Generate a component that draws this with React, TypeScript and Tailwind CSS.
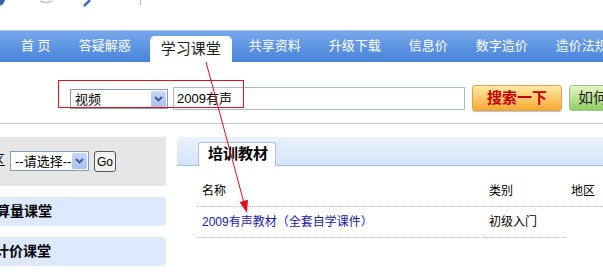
const font = "font-['Liberation_Sans','Noto_Sans_CJK_SC',sans-serif]";

function Chevron() {
  return (
    <svg width="9" height="6" viewBox="0 0 9 6">
      <path d="M1 1 L4.5 4.5 L8 1" fill="none" stroke="#3a5a9a" strokeWidth="1.8" />
    </svg>
  );
}

function Select({ label, width }: { label: string; width: string }) {
  return (
    <div className={`flex h-full shrink-0 items-stretch border border-[#7f9db9] bg-white ${width}`}>
      <span className="flex flex-1 items-center whitespace-nowrap pl-[4px] text-[13px] leading-none text-black">{label}</span>
      <span className="m-[1px] flex w-[15px] shrink-0 items-center justify-center rounded-[2px] bg-gradient-to-b from-[#c6d6f7] to-[#a9c0ef]">
        <Chevron />
      </span>
    </div>
  );
}

const navItems = ["首 页", "答疑解惑", "学习课堂", "共享资料", "升级下载", "信息价", "数字造价", "造价法规"];

export default function App() {
  return (
    <div className={`relative h-[276px] w-[603px] overflow-hidden bg-white ${font}`}>
      {/* top strip — remnants of the logo */}
      <div className="relative h-[30px]">
        <svg className="absolute left-0 top-0" width="160" height="8" viewBox="0 0 160 8">
          <circle cx="-2" cy="-1" r="7" fill="#3b62a8" />
          <path d="M40 1 Q46 4 52 1" fill="none" stroke="#c8c8c8" strokeWidth="1.5" />
          <path d="M84 6 L90 0" stroke="#3a6cc0" strokeWidth="2.5" />
          <line x1="140.5" y1="0" x2="140.5" y2="5" stroke="#bcbcbc" />
        </svg>
      </div>

      {/* nav bar */}
      <nav className="flex h-[32px] items-end border-t border-[#a9c8f2] bg-gradient-to-b from-[#76a7ea] to-[#4784da] pl-[7px]">
        {navItems.map((item) =>
          item === "学习课堂" ? (
            <div
              key={item}
              className="ml-[5px] mr-[3px] flex h-[26px] shrink-0 items-center whitespace-nowrap rounded-t-[5px] bg-white px-[11px] text-[15px] text-[#222]"
            >
              {item}
            </div>
          ) : (
            <div key={item} className="flex h-[32px] shrink-0 items-center whitespace-pre px-[14px] text-[13px] text-white">
              {item}
            </div>
          )
        )}
      </nav>

      {/* search row */}
      <div className="flex h-[62px] items-start border-b border-[#b7c8dc] pl-[70px] pt-[23px]">
        <div className="mt-[4px] h-[20px] shrink-0">
          <Select label="视频" width="w-[98px]" />
        </div>
        <div className="ml-[5px] mt-[2px] flex h-[23px] w-[292px] shrink-0 items-center border border-[#a7bbd7] bg-white pl-[3px] text-[13px] text-black">
          2009有声
        </div>
        <button className="ml-[7px] flex h-[26px] w-[90px] shrink-0 items-center justify-center rounded-[3px] border border-[#d9a45a] bg-gradient-to-b from-[#ffe9a0] to-[#f6a92c] text-[15px] font-bold text-[#c40000] shadow-[0_1px_1px_rgba(0,0,0,0.25)]">
          搜索一下
        </button>
        <button className="ml-[7px] flex h-[26px] w-[80px] shrink-0 items-center justify-start whitespace-nowrap rounded-[3px] border border-[#9fc08a] bg-gradient-to-b from-[#e4f5c6] to-[#8fcf5e] pl-[8px] text-[15px] text-[#222]">
          如何搜索
        </button>
      </div>

      {/* body */}
      <div className="flex">
        {/* left column */}
        <div className="w-[166px] shrink-0 overflow-hidden pt-[13px]">
          <div className="flex h-[49px] items-start bg-[#e6e6e6] pt-[14px]">
            <span className="ml-[-8px] mt-[2px] shrink-0 text-[13px] leading-none text-black underline">区</span>
            <div className="ml-[5px] h-[20px] shrink-0">
              <Select label="--请选择--" width="w-[79px]" />
            </div>
            <button className="ml-[5px] flex h-[21px] w-[22px] shrink-0 items-center justify-center rounded-[3px] border border-[#555] bg-[#f2f2f0] text-[12px] leading-none text-black">
              Go
            </button>
          </div>
          <div className="mt-[11px] flex h-[29px] items-center rounded-r-[4px] bg-[#dce8fb] text-[14px] font-bold text-black">
            <span className="ml-[-4px] whitespace-nowrap">算量课堂</span>
          </div>
          <div className="mt-[11px] flex h-[29px] items-center rounded-r-[4px] bg-[#dce8fb] text-[14px] font-bold text-black">
            <span className="ml-[-5px] whitespace-nowrap">计价课堂</span>
          </div>
        </div>

        {/* right column */}
        <div className="ml-[11px] flex-1 pt-[13px]">
          <div className="flex h-[29px] items-end rounded-tl-[3px] border-b border-[#a9c2e3] bg-gradient-to-b from-[#eaf2fd] to-[#d4e4f9] pl-[21px]">
            <div className="mb-[-1px] flex h-[24px] w-[78px] items-center rounded-t-[3px] border border-b-0 border-[#a9c2e3] bg-white pl-[9px] text-[15px] font-bold text-black">
              培训教材
            </div>
          </div>

          <div className="pl-[20px] text-[12px] text-black">
            <div className="flex h-[41px] items-end border-b border-dotted border-[#b8b8b8] pb-[6px]">
              <span className="w-[287px] shrink-0 pl-[5px]">名称</span>
              <span className="w-[82px] shrink-0 pl-[5px]">类别</span>
              <span className="pl-[5px]">地区</span>
            </div>
            <div className="flex h-[31px]">
              <span className="flex w-[287px] shrink-0 items-center border-b border-dotted border-[#b8b8b8] pl-[5px] text-[#1a1aa8]">
                2009有声教材（全套自学课件）
              </span>
              <span className="flex w-[82px] shrink-0 items-center border-b border-dotted border-[#b8b8b8] pl-[5px]">初级入门</span>
            </div>
          </div>
        </div>
      </div>

      {/* annotation overlay */}
      <div className="pointer-events-none absolute left-[58px] top-[80px] h-[28px] w-[186px] border border-[#e0141e]" />
      <svg className="pointer-events-none absolute left-0 top-0" width="603" height="276" viewBox="0 0 603 276">
        <line x1="206" y1="62" x2="243.5" y2="201" stroke="#d8101c" strokeWidth="1" />
        <polygon points="247,213 239.5,202 248,199.8" fill="#e3101c" />
      </svg>
    </div>
  );
}
